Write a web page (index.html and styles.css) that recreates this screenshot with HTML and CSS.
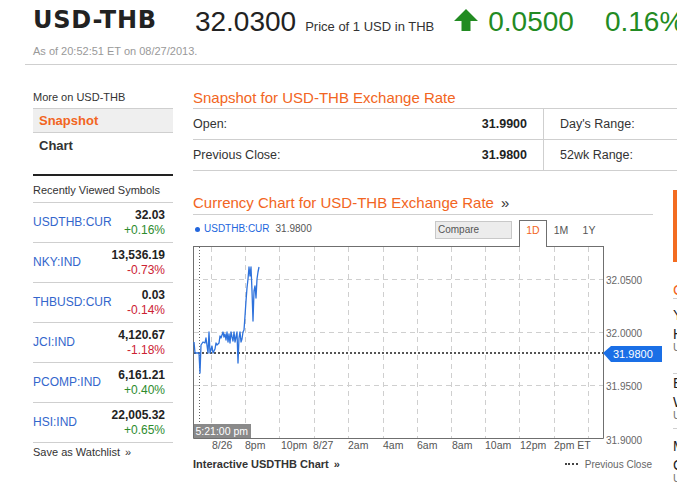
FILE: index.html
```html
<!DOCTYPE html>
<html lang="en">
<head>
<meta charset="utf-8">
<title>USD-THB Exchange Rate</title>
<link rel="stylesheet" href="styles.css">
</head>
<body>
<div class="page">
  <header class="quote-head">
    <div class="quote-line"><h1 class="ticker">USD-THB</h1><span class="price">32.0300</span><span class="price-note">Price of 1 USD in THB</span><svg class="arrow" width="24" height="22" viewBox="0 0 24 22"><polygon points="12,0 24,12 16.5,12 16.5,22 7.5,22 7.5,12 0,12" fill="#228b22"/></svg><span class="change">0.0500</span><span class="pct">0.16%</span></div>
    <div class="asof">As of 20:52:51 ET on 08/27/2013.</div>
  </header>

  <div class="content">
    <aside class="sidebar">
      <div class="side-label">More on USD-THB</div>
      <nav class="side-nav">
        <a class="nav-item active">Snapshot</a>
        <a class="nav-item plain">Chart</a>
      </nav>
      <section class="recent">
        <div class="recent-title">Recently Viewed Symbols</div>
        <div class="sym-row"><a class="sym">USDTHB:CUR</a><div class="sym-vals"><div class="sym-price">32.03</div><div class="up">+0.16%</div></div></div>
        <div class="sym-row"><a class="sym">NKY:IND</a><div class="sym-vals"><div class="sym-price">13,536.19</div><div class="down">-0.73%</div></div></div>
        <div class="sym-row"><a class="sym">THBUSD:CUR</a><div class="sym-vals"><div class="sym-price">0.03</div><div class="down">-0.14%</div></div></div>
        <div class="sym-row"><a class="sym">JCI:IND</a><div class="sym-vals"><div class="sym-price">4,120.67</div><div class="down">-1.18%</div></div></div>
        <div class="sym-row"><a class="sym">PCOMP:IND</a><div class="sym-vals"><div class="sym-price">6,161.21</div><div class="up">+0.40%</div></div></div>
        <div class="sym-row"><a class="sym">HSI:IND</a><div class="sym-vals"><div class="sym-price">22,005.32</div><div class="up">+0.65%</div></div></div>
        <div class="watch">Save as Watchlist <span class="raquo">&raquo;</span></div>
      </section>
    </aside>

    <main class="main">
      <section class="snap">
        <h2 class="sec-title snap-title">Snapshot for USD-THB Exchange Rate</h2>
        <div class="snap-table">
          <div class="snap-cell left"><span>Open:</span><b>31.9900</b></div>
          <div class="snap-cell right"><span>Day's Range:</span></div>
          <div class="snap-cell left"><span>Previous Close:</span><b>31.9800</b></div>
          <div class="snap-cell right"><span>52wk Range:</span></div>
        </div>
      </section>

      <div class="lower">
        <section class="chart-sec">
          <h2 class="sec-title chart-title">Currency Chart for USD-THB Exchange Rate <span class="title-more">&raquo;</span></h2>
          <div class="legend-row">
            <div class="legend"><span class="dot"></span><span class="leg-sym">USDTHB:CUR</span><span class="leg-val">31.9800</span></div>
            <div class="compare">Compare</div>
            <div class="tabs">
              <span class="tab on">1D</span><span class="tab">1M</span><span class="tab">1Y</span>
            </div>
          </div>
          <svg class="chart-svg" width="470" height="209" viewBox="0 0 470 209">
            <g stroke="#cfcfcf" stroke-width="1" stroke-dasharray="5 4" fill="none">
              <line x1="18.5" y1="1" x2="18.5" y2="192"/>
              <line x1="52.5" y1="1" x2="52.5" y2="192"/>
              <line x1="86.5" y1="1" x2="86.5" y2="192"/>
              <line x1="121.5" y1="1" x2="121.5" y2="192"/>
              <line x1="155.5" y1="1" x2="155.5" y2="192"/>
              <line x1="190.5" y1="1" x2="190.5" y2="192"/>
              <line x1="224.5" y1="1" x2="224.5" y2="192"/>
              <line x1="258.5" y1="1" x2="258.5" y2="192"/>
              <line x1="292.5" y1="1" x2="292.5" y2="192"/>
              <line x1="326.5" y1="1" x2="326.5" y2="192"/>
              <line x1="361.5" y1="1" x2="361.5" y2="192"/>
              <line x1="395.5" y1="1" x2="395.5" y2="192"/>
              <line x1="1" y1="33.5" x2="410" y2="33.5"/>
              <line x1="1" y1="86.5" x2="410" y2="86.5"/>
              <line x1="1" y1="139.5" x2="410" y2="139.5"/>
            </g>
            <path d="M0.5 0 V192.5 H410.5 V0 M0 0.5 H327 M354 0.5 H411" stroke="#6f6f6f" stroke-width="1" fill="none"/>
            <line x1="1" y1="107" x2="410" y2="107" stroke="#555" stroke-width="2" stroke-dasharray="2 2"/>
            <line x1="6.5" y1="1" x2="6.5" y2="178" stroke="#666" stroke-width="1" stroke-dasharray="1 2"/>
            <polyline fill="none" stroke="#2e72dc" stroke-width="1.3" stroke-linejoin="round" points="1,96 2,107 6,107 7,127 8,99 10,96 12,97 13,92 15,107 16,86 17,107 19,100 20,107 22,103 23,97 24,99 26,97 27,90 28,92 30,86 31,91 32,88 33,94 34,86 35,96 36,88 37,97 38,86 39,91 40,95 41,86 42,96 44,86 45,117 46,92 47,86 48,96 49,93 50,86 51,84 52,70 53,55 54,42 55,33 56,21 57,30 58,21 59,45 60,75 61,45 62,40 63,52 64,33 65,26 66,21"/>
            <rect x="1" y="178" width="57" height="14" fill="#8a8a8a"/>
            <text class="time-label" x="2.5" y="189">5:21:00 pm</text>
            <polygon points="410,107 418,100 469,100 469,116 418,116" fill="#1a6fe6"/>
            <text class="tag-text" x="420" y="111.5">31.9800</text>
            <g class="y-labels">
              <text x="413" y="37.5">32.0500</text>
              <text x="413" y="90.5">32.0000</text>
              <text x="413" y="144">31.9500</text>
              <text x="413" y="198">31.9000</text>
            </g>
            <g class="x-labels">
              <text x="19" y="203">8/26</text>
              <text x="52" y="203">8pm</text>
              <text x="88" y="203">10pm</text>
              <text x="120" y="203">8/27</text>
              <text x="155" y="203">2am</text>
              <text x="190" y="203">4am</text>
              <text x="224" y="203">6am</text>
              <text x="259" y="203">8am</text>
              <text x="292" y="203">10am</text>
              <text x="327" y="203">12pm</text>
              <text x="361" y="203">2pm ET</text>
            </g>
          </svg>
          <div class="chart-foot">
            <a class="interactive">Interactive USDTHB Chart <span class="raquo">&raquo;</span></a>
            <span class="prev-key"><span class="dots"></span>Previous Close</span>
          </div>
        </section>

        <aside class="news">
          <div class="news-bar"></div>
          <div class="news-title">Currency News</div>
          <div class="news-item n1">
            <div class="headline">Yen Climbs as Investors Seek<br>Haven on Syria Concern</div>
            <div class="meta">Updated Aug 27, 2013</div>
          </div>
          <div class="news-item n2">
            <div class="headline">Emerging-Market Currencies Slide<br>With Rupee at Record Low</div>
            <div class="meta">Updated Aug 27, 2013</div>
          </div>
          <div class="news-item n3">
            <div class="headline">Most Asian Currencies Fall on<br>Capital Outflow Concern</div>
            <div class="meta">Updated Aug 27, 2013</div>
          </div>
        </aside>
      </div>
    </main>
  </div>
</div>
</body>
</html>
```

FILE: styles.css
```css
* { box-sizing: border-box; }

html, body {
  margin: 0;
  padding: 0;
  overflow: hidden;
  background: #fff;
}

body {
  font-family: "Liberation Sans", Arial, sans-serif;
  color: #333;
  width: 677px;
  height: 482px;
}

.page { width: 980px; }

/* ---------- quote header ---------- */
.quote-head {
  margin-left: 25px;
  padding-bottom: 6px;
  border-bottom: 1px solid #cfcfcf;
}

.quote-line {
  height: 40px;
  padding: 5px 0 0 8px;
  font-size: 28px;
  line-height: 34px;
  white-space: nowrap;
}

.ticker {
  display: inline;
  margin: 0;
  font-family: "DejaVu Sans", "Liberation Sans", sans-serif;
  font-size: 24px;
  line-height: 24px;
  font-weight: bold;
  letter-spacing: 0.8px;
  color: #222;
  vertical-align: 3px;
}

.price { margin-left: 38px; color: #222; }

.price-note {
  margin-left: 9px;
  font-size: 13px;
  line-height: 14px;
  color: #333;
}

.arrow { margin-left: 20px; vertical-align: baseline; }

.change { margin-left: 10px; color: #238b23; }

.pct { margin-left: 31px; color: #238b23; }

.asof {
  margin-top: 4px;
  padding-left: 8px;
  font-size: 11px;
  line-height: 14px;
  color: #999;
}

/* ---------- layout ---------- */
.content {
  display: flex;
  padding-left: 33px;
}

.sidebar { width: 140px; flex: none; }

.main { width: 780px; margin-left: 20px; flex: none; }

/* ---------- sidebar ---------- */
.side-label {
  margin-top: 25px;
  padding-bottom: 4px;
  font-size: 11px;
  line-height: 14px;
  color: #333;
  border-bottom: 1px solid #cfcfcf;
}

.nav-item {
  display: block;
  padding-left: 6px;
  font-size: 13px;
  font-weight: bold;
}

.nav-item.active {
  line-height: 23px;
  background: #efefef;
  color: #f26522;
  border-bottom: 1px solid #cfcfcf;
}

.nav-item.plain { line-height: 26px; color: #333; }

.recent {
  margin-top: 15px;
  border-top: 2px solid #222;
}

.recent-title {
  padding: 7px 0 5px;
  font-size: 11px;
  line-height: 14px;
  color: #333;
  border-bottom: 1px solid #cfcfcf;
}

.sym-row {
  height: 40px;
  display: flex;
  align-items: center;
  justify-content: space-between;
  padding-right: 8px;
  border-bottom: 1px solid #cfcfcf;
  font-size: 12px;
  line-height: 15px;
}

.sym { color: #3366cc; }

.sym-vals { text-align: right; }

.sym-price { font-weight: bold; color: #222; }

.up { color: #2e8b2e; }

.down { color: #cc2233; }

.watch {
  margin-top: 2px;
  font-size: 11px;
  line-height: 15px;
  color: #333;
}

.raquo { margin-left: 2px; }

/* ---------- section titles ---------- */
.sec-title {
  margin: 0;
  font-size: 15px;
  font-weight: normal;
  line-height: 20px;
  color: #f26522;
  border-bottom: 1px solid #cfcfcf;
}

.snap-title { margin-top: 23px; }

.chart-title {
  margin-top: 22px;
  padding-bottom: 1px;
}

.title-more { margin-left: 3px; color: #333; }

/* ---------- snapshot table ---------- */
.snap-table {
  display: grid;
  grid-template-columns: 351px 1fr;
}

.snap-cell {
  display: flex;
  justify-content: space-between;
  height: 31px;
  line-height: 30px;
  font-size: 12.5px;
  color: #333;
  border-bottom: 1px solid #cfcfcf;
}

.snap-cell b { color: #222; }

.snap-cell.left {
  padding-right: 16px;
  border-right: 1px solid #cfcfcf;
}

.snap-cell.right { padding: 0 20px 0 16px; }

/* ---------- chart ---------- */
.lower { display: flex; }

.chart-sec { width: 460px; flex: none; }

.legend-row {
  display: flex;
  align-items: flex-start;
  width: 410px;
  height: 31px;
}

.legend {
  flex: 1;
  margin-top: 8px;
  display: flex;
  align-items: center;
  font-size: 10px;
  line-height: 12px;
}

.dot {
  width: 5px;
  height: 5px;
  margin: 0 4px 0 2px;
  border-radius: 50%;
  background: #2266dd;
}

.leg-sym { color: #2266dd; }

.leg-val { margin-left: 6px; color: #555; }

.compare {
  width: 77px;
  height: 18px;
  margin-top: 6px;
  padding-left: 2px;
  font-size: 10px;
  line-height: 16px;
  color: #555;
  background: #ececec;
  border: 1px solid #c8c8c8;
}

.tabs {
  display: flex;
  margin-left: 7px;
}

.tab {
  width: 28px;
  height: 27px;
  margin-top: 5px;
  padding-top: 3px;
  text-align: center;
  font-size: 10.5px;
  line-height: 14px;
  color: #555;
}

.tab.on {
  color: #f26522;
  background: #fff;
  border: 1px solid #6f6f6f;
  border-bottom: none;
  padding-top: 2px;
}

.chart-svg { display: block; }

.chart-svg text { font-family: "Liberation Sans", Arial, sans-serif; }

.time-label { font-size: 10.5px; fill: #fff; }

.tag-text { font-size: 11px; fill: #fff; }

.y-labels text { font-size: 10px; fill: #666; }

.x-labels text { font-size: 10.5px; fill: #555; }

.chart-foot {
  display: flex;
  justify-content: space-between;
  align-items: baseline;
  margin-top: 2px;
  padding-right: 1px;
  line-height: 14px;
}

.interactive {
  font-size: 11px;
  font-weight: bold;
  color: #333;
}

.prev-key { font-size: 10px; color: #666; }

.dots {
  display: inline-block;
  width: 13px;
  margin-right: 7px;
  vertical-align: 3px;
  border-top: 2px dotted #444;
}

/* ---------- news column ---------- */
.news { width: 300px; margin-left: 20px; flex: none; }

.news-bar {
  margin-top: 19px;
  height: 72px;
  background: #f36c21;
}

.news-title {
  margin-top: 19px;
  font-size: 15px;
  line-height: 17px;
  color: #f26522;
  border-bottom: 1px solid #cfcfcf;
}

.news-item { border-bottom: 1px solid #cfcfcf; }

.headline {
  font-size: 14px;
  line-height: 19px;
  color: #222;
}

.meta {
  margin-top: -3px;
  font-size: 11px;
  line-height: 12px;
  color: #777;
}

.n1 { padding: 7px 0 20px; }
.n2 { padding: 0 0 7px; }
.n3 { padding: 8px 0 10px; }
```
